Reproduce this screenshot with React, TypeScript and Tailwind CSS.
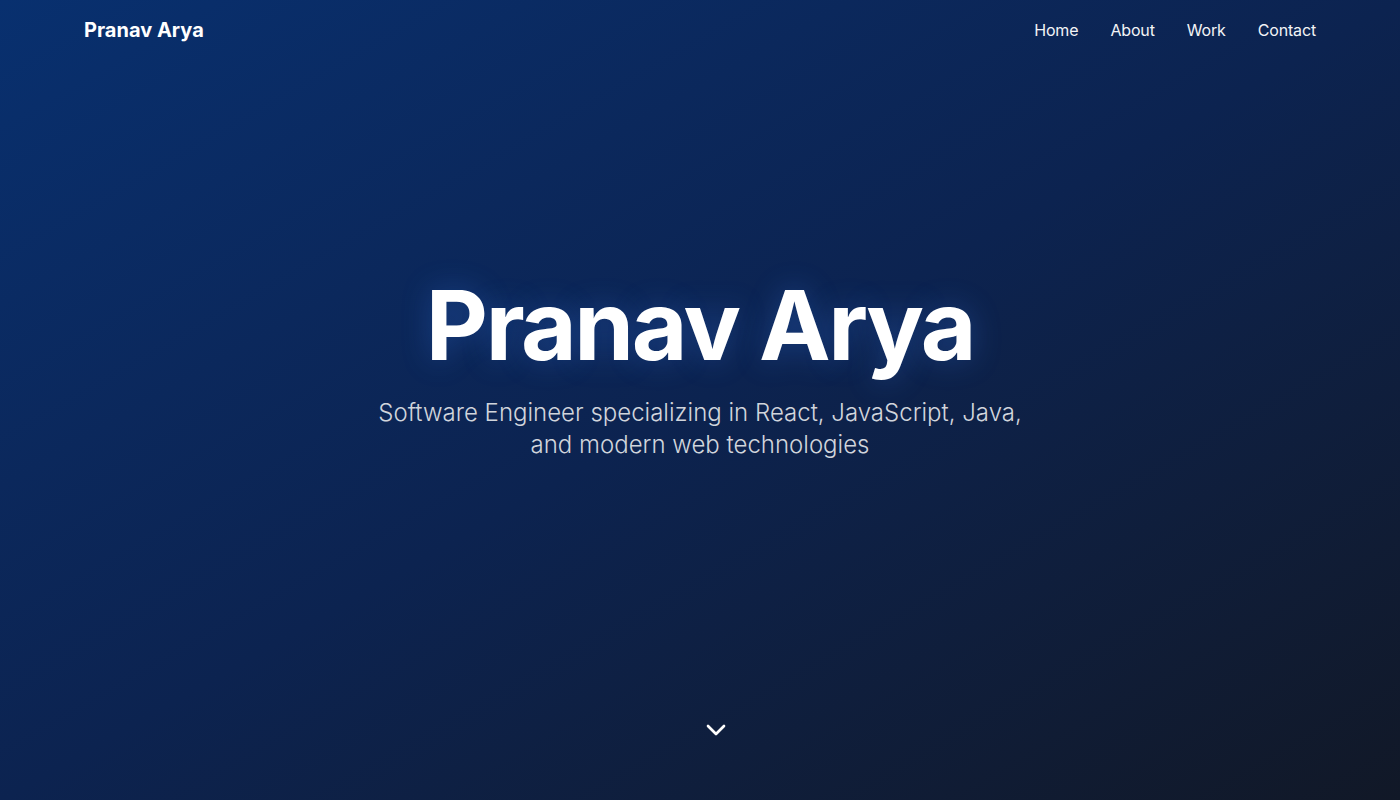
import { ChevronDown } from "lucide-react";

const links = ["Home", "About", "Work", "Contact"];

export default function App() {
  return (
    <div className="relative h-[800px] w-full overflow-hidden bg-gradient-to-br from-[#08306f] via-[#0c2350] to-[#111827] text-white font-['Inter',sans-serif]">
      <nav className="mx-auto flex max-w-7xl items-center justify-between px-6 py-4">
        <span className="text-xl font-bold">Pranav Arya</span>
        <ul className="flex items-center gap-8 text-base tracking-[-0.01em] text-gray-100">
          {links.map((l) => (
            <li key={l}>{l}</li>
          ))}
        </ul>
      </nav>

      <section className="flex flex-col items-center pt-[217px] text-center">
        <h1 className="text-8xl font-bold leading-none tracking-tight [text-shadow:0_0_30px_rgba(59,130,246,0.3)]">
          Pranav Arya
        </h1>
        <p className="mt-6 max-w-2xl text-2xl font-light leading-8 text-gray-300">
          Software Engineer specializing in React, JavaScript, Java, and modern web technologies
        </p>
      </section>

      <div className="absolute bottom-[54px] left-1/2">
        <ChevronDown size={32} className="text-white" />
      </div>
    </div>
  );
}
